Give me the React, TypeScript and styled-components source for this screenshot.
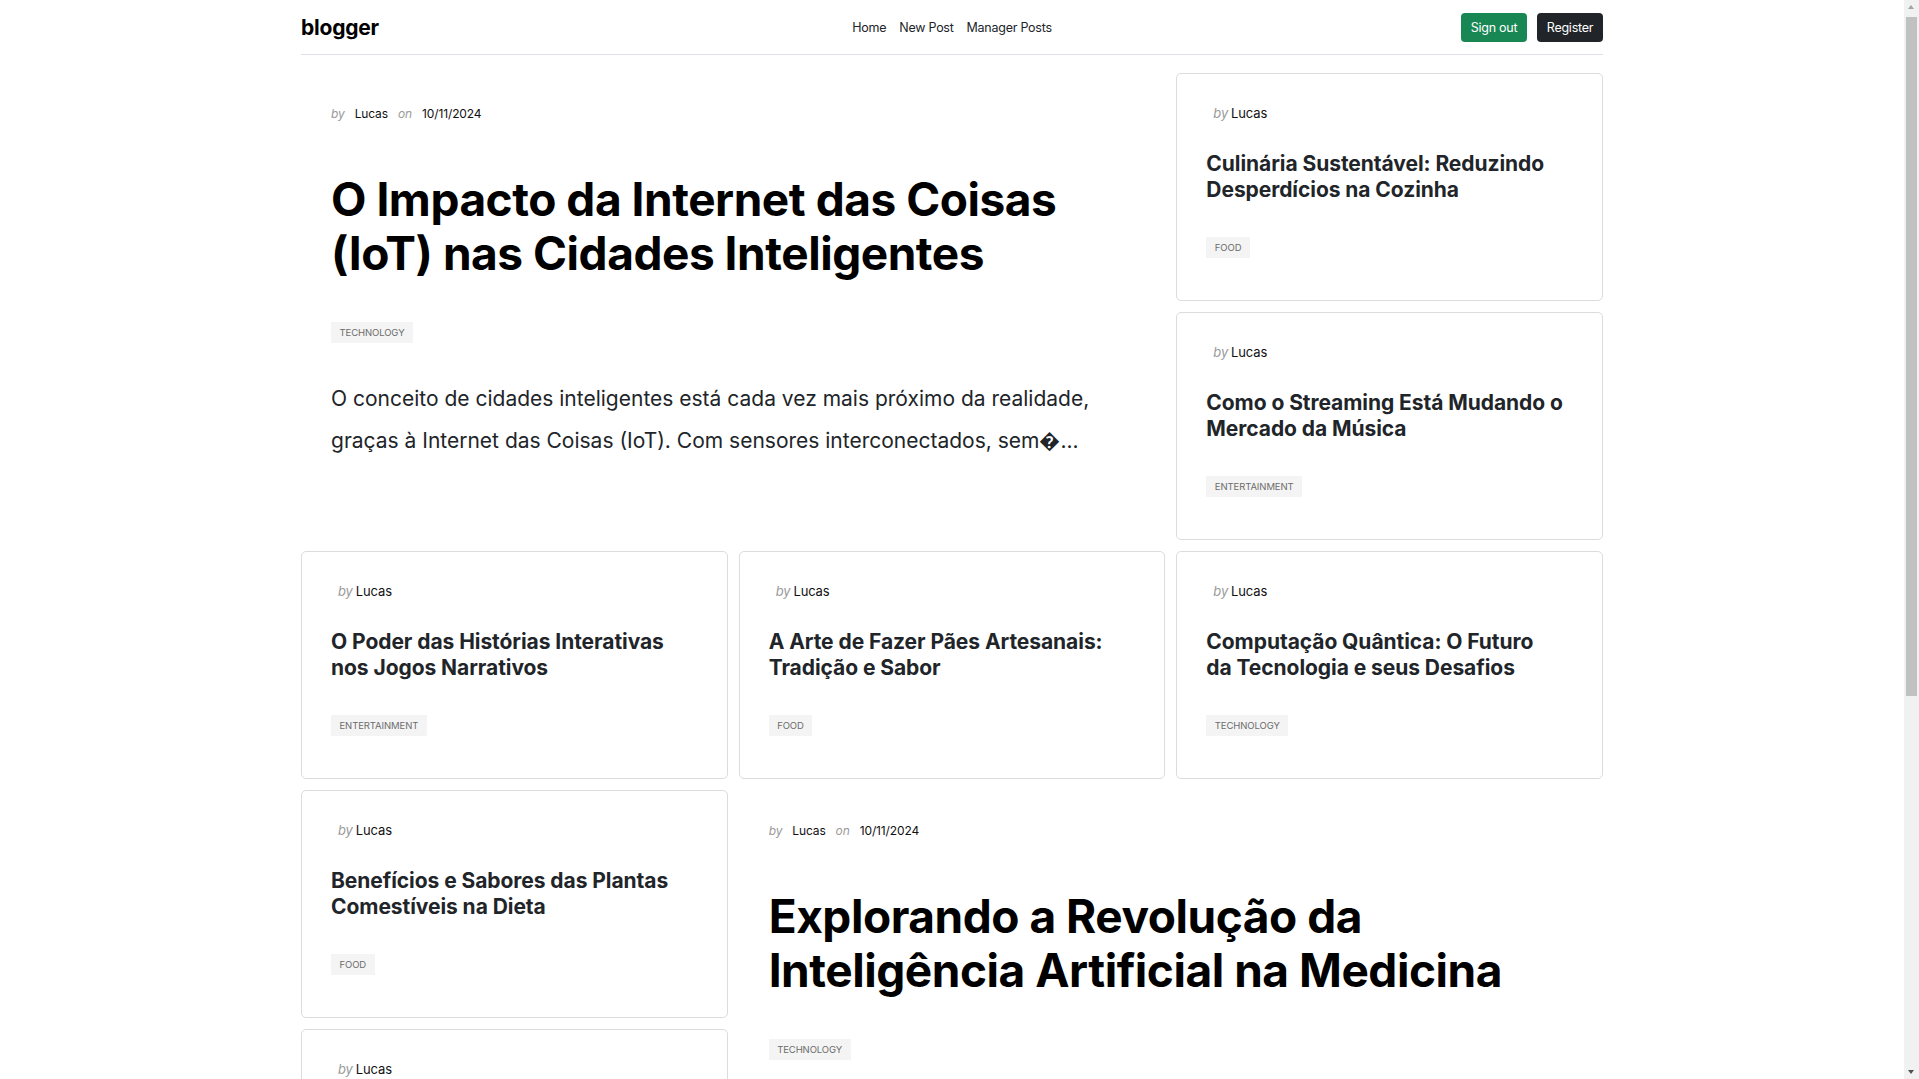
import React from "react";
import styled, { createGlobalStyle } from "styled-components";

const GlobalStyle = createGlobalStyle`
  html, body { margin: 0; padding: 0; background: #ffffff; }
  body {
    font-family: Inter, "Liberation Sans", Arial, sans-serif;
    color: #212529;
    padding-right: 15px;
  }
  * { box-sizing: border-box; }
`;

const Page = styled.div`
  max-width: 1302px;
  margin: 0 auto;
  padding-bottom: 164px;
`;

const Header = styled.header`
  display: grid;
  grid-template-columns: 1fr auto 1fr;
  align-items: center;
  height: 55px;
  border-bottom: 1px solid #dee2e6;
`;

const Logo = styled.a`
  justify-self: start;
  font-size: 21px;
  font-weight: 700;
  color: #000;
  letter-spacing: -0.01em;
  text-decoration: none;
`;

const Nav = styled.nav`
  display: flex;
  gap: 13px;
`;

const NavLink = styled.a`
  font-size: 12.5px;
  color: #212529;
  text-decoration: none;
  letter-spacing: -0.02em;
`;

const Actions = styled.div`
  justify-self: end;
  display: flex;
  gap: 10px;
`;

const Button = styled.button<{ $variant: "success" | "dark" }>`
  height: 29px;
  width: 66px;
  border: none;
  border-radius: 4px;
  font-family: inherit;
  font-size: 12.5px;
  letter-spacing: -0.02em;
  color: #fff;
  background: ${(p) => (p.$variant === "success" ? "#198754" : "#212529")};
  cursor: pointer;
`;

const Grid = styled.main`
  display: grid;
  grid-template-columns: repeat(3, 1fr);
  grid-auto-rows: 227.5px;
  column-gap: 11px;
  row-gap: 11.5px;
  margin-top: 18px;
`;

const Card = styled.article<{ $featured?: boolean }>`
  border: 1px solid ${(p) => (p.$featured ? "transparent" : "#dcdcdc")};
  border-radius: 5px;
  padding: 29px 29px;
  ${(p) => (p.$featured ? "grid-column: span 2; grid-row: span 2;" : "")}
  overflow: hidden;
`;

const Meta = styled.div<{ $featured?: boolean }>`
  display: flex;
  align-items: center;
  gap: ${(p) => (p.$featured ? "10px" : "3px")};
  padding-left: ${(p) => (p.$featured ? "0" : "7px")};
  height: 20px;
  font-size: ${(p) => (p.$featured ? "12px" : "13px")};
  letter-spacing: -0.01em;
`;

const Muted = styled.em`
  color: #9a9a9a;
  font-style: italic;
`;

const Strong = styled.span`
  color: #111;
`;

const Title = styled.h2<{ $featured?: boolean }>`
  margin: ${(p) => (p.$featured ? "49px 0 0" : "28px 0 0")};
  max-width: ${(p) => (p.$featured ? "none" : "357px")};
  font-size: ${(p) => (p.$featured ? "46px" : "21px")};
  line-height: ${(p) => (p.$featured ? "54px" : "25.5px")};
  font-weight: 700;
  letter-spacing: ${(p) => (p.$featured ? "-0.01em" : "-0.003em")};
  color: ${(p) => (p.$featured ? "#000" : "#212529")};
`;

const Tag = styled.span<{ $featured?: boolean }>`
  display: inline-block;
  margin-top: ${(p) => (p.$featured ? "42px" : "35px")};
  padding: 5px 8.5px;
  background: #f4f4f4;
  color: #6c6c6c;
  font-size: 9.5px;
  line-height: 11px;
  text-transform: uppercase;
  letter-spacing: -0.01em;
`;

const Excerpt = styled.p`
  margin: 35px 0 0;
  max-width: 800px;
  font-size: 21px;
  line-height: 41.6px;
  color: #212529;
  letter-spacing: 0;
`;

const ScrollTrack = styled.div`
  position: fixed;
  top: 0;
  right: 0;
  width: 15px;
  height: 100vh;
  background: #f1f1f1;
`;

const ScrollThumb = styled.div`
  position: absolute;
  top: 17px;
  left: 2px;
  right: 2px;
  height: 679px;
  background: #c1c1c1;
`;

const ScrollArrow = styled.div<{ $down?: boolean }>`
  position: absolute;
  left: 4px;
  ${(p) => (p.$down ? "bottom: 5px;" : "top: 5px;")}
  width: 0;
  height: 0;
  border-left: 3.5px solid transparent;
  border-right: 3.5px solid transparent;
  ${(p) =>
    p.$down ? "border-top: 4px solid #505050;" : "border-bottom: 4px solid #a3a3a3;"}
`;

type Post = {
  title: string;
  category: string;
  featured?: boolean;
  date?: string;
  excerpt?: string;
};

const posts: Post[] = [
  {
    title: "O Impacto da Internet das Coisas (IoT) nas Cidades Inteligentes",
    category: "Technology",
    featured: true,
    date: "10/11/2024",
    excerpt:
      "O conceito de cidades inteligentes está cada vez mais próximo da realidade, graças à Internet das Coisas (IoT). Com sensores interconectados, sem\uFFFD...",
  },
  { title: "Culinária Sustentável: Reduzindo Desperdícios na Cozinha", category: "Food" },
  { title: "Como o Streaming Está Mudando o Mercado da Música", category: "Entertainment" },
  { title: "O Poder das Histórias Interativas nos Jogos Narrativos", category: "Entertainment" },
  { title: "A Arte de Fazer Pães Artesanais: Tradição e Sabor", category: "Food" },
  { title: "Computação Quântica: O Futuro da Tecnologia e seus Desafios", category: "Technology" },
  { title: "Benefícios e Sabores das Plantas Comestíveis na Dieta", category: "Food" },
  {
    title: "Explorando a Revolução da Inteligência Artificial na Medicina",
    category: "Technology",
    featured: true,
    date: "10/11/2024",
  },
  { title: "Séries Que Marcaram Gerações e Seu Legado Cultural", category: "Entertainment" },
  { title: "Segurança Digital: Protegendo Seus Dados Pessoais", category: "Technology" },
  { title: "Sabores do Mundo: Explorando a Culinária Asiática", category: "Food" },
  { title: "O Crescimento dos Festivais de Música Independente", category: "Entertainment" },
];

function PostCard({ post }: { post: Post }) {
  const f = !!post.featured;
  return (
    <Card $featured={f}>
      <Meta $featured={f}>
        <Muted>by</Muted>
        <Strong>Lucas</Strong>
        {f && (
          <>
            <Muted>on</Muted>
            <Strong>{post.date}</Strong>
          </>
        )}
      </Meta>
      <Title $featured={f}>{post.title}</Title>
      <Tag $featured={f}>{post.category}</Tag>
      {post.excerpt && <Excerpt>{post.excerpt}</Excerpt>}
    </Card>
  );
}

export default function App() {
  return (
    <>
      <GlobalStyle />
      <Page>
        <Header>
          <Logo href="#">blogger</Logo>
          <Nav>
            <NavLink href="#">Home</NavLink>
            <NavLink href="#">New Post</NavLink>
            <NavLink href="#">Manager Posts</NavLink>
          </Nav>
          <Actions>
            <Button $variant="success">Sign out</Button>
            <Button $variant="dark">Register</Button>
          </Actions>
        </Header>
        <Grid>
          {posts.map((p, i) => (
            <PostCard key={i} post={p} />
          ))}
        </Grid>
      </Page>
      <ScrollTrack>
        <ScrollArrow />
        <ScrollThumb />
        <ScrollArrow $down />
      </ScrollTrack>
    </>
  );
}
